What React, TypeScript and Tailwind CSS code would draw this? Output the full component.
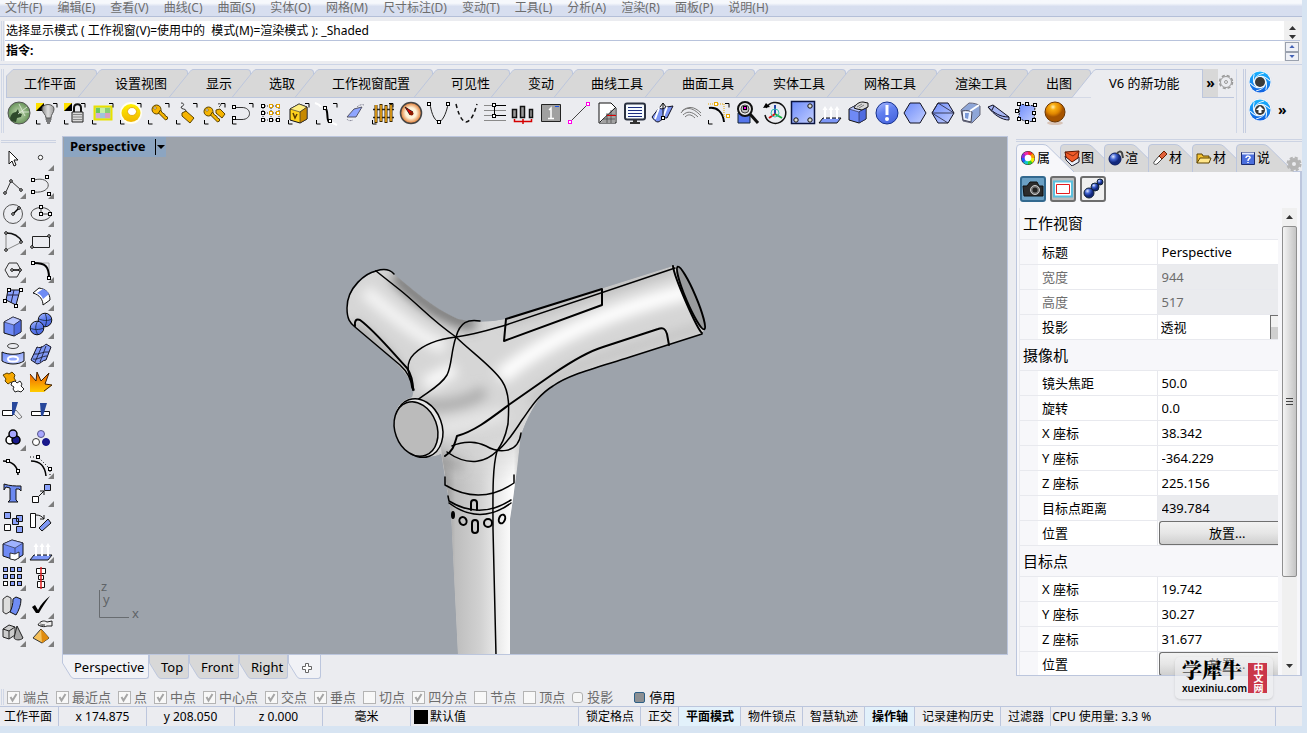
import { useState } from 'react'
import type { ReactNode } from 'react'
import clsx from 'clsx'

type Tool = { label: string; art: ReactNode; more?: boolean }

const menus = [
  '文件(F)', '编辑(E)', '查看(V)', '曲线(C)', '曲面(S)', '实体(O)', '网格(M)', '尺寸标注(D)',
  '变动(T)', '工具(L)', '分析(A)', '渲染(R)', '面板(P)', '说明(H)',
]

const toolbarTabs = [
  { name: '工作平面', width: 'w-[91px]' },
  { name: '设置视图', width: 'w-[91px]' },
  { name: '显示', width: 'w-[63px]' },
  { name: '选取', width: 'w-[63px]' },
  { name: '工作视窗配置', width: 'w-[119px]' },
  { name: '可见性', width: 'w-[77px]' },
  { name: '变动', width: 'w-[63px]' },
  { name: '曲线工具', width: 'w-[91px]' },
  { name: '曲面工具', width: 'w-[91px]' },
  { name: '实体工具', width: 'w-[91px]' },
  { name: '网格工具', width: 'w-[91px]' },
  { name: '渲染工具', width: 'w-[91px]' },
  { name: '出图', width: 'w-[63px]' },
  { name: 'V6 的新功能', width: 'w-[111px]' },
]

/* ---------- drawing helpers ---------- */

function Sq({ x, y, c = '#000', f = '#fff' }: { x: number; y: number; c?: string; f?: string }) {
  return <rect x={x - 1.5} y={y - 1.5} width="3" height="3" fill={f} stroke={c} strokeWidth="1" />
}

function Dot({ x, y }: { x: number; y: number }) {
  return <circle cx={x} cy={y} r="1.3" fill="#fff" stroke="#000" />
}

function Marks() {
  return <path d="M3.500 21v4h4M20 4.500h4v4" fill="none" stroke="#000" />
}

function Key() {
  return (
    <>
      <circle cx="11.500" cy="10.500" r="4.500" fill="#f6b400" stroke="#5a4300" />
      <circle cx="10" cy="9" r="1.200" fill="#fff" stroke="#5a4300" strokeWidth=".6" />
      <path d="M13.500 14l7 7 2-1v-2l-2-1-1-2-2-1-2-3z" fill="#f6b400" stroke="#5a4300" />
    </>
  )
}

function Arrows() {
  return (
    <>
      <path d="M2 24l4-5h18l-4 5z" fill="#7d97f7" stroke="#111" />
      <path d="M8 20V9M14 20V9M20 20V9" stroke="#fff" strokeWidth="2" />
      <path d="M5.500 11L8 7l2.500 4zM11.500 11L14 7l2.500 4zM17.500 11L20 7l2.500 4z" fill="#fff" />
    </>
  )
}

function Cube({ fill = '#6f8af5', top = '#b9c6ff', side = '#4f6be0' }) {
  return (
    <>
      <path d="M4 10l9-5 8 3v12l-7 4-10-3z" fill={fill} stroke="#111" />
      <path d="M4 10l9-5 8 3-7 5z" fill={top} stroke="#223" strokeWidth=".6" />
      <path d="M14 13l7-5v12l-7 4z" fill={side} stroke="#223" strokeWidth=".6" />
    </>
  )
}

const tools: Tool[] = [
  {
    label: 'Rhino',
    art: (
      <>
        <circle cx="14" cy="14" r="11" fill="url(#green)" stroke="#555" />
        <path d="M5 19c1-4 3-6 6-6l2-3 1 4 3 1-1 3-4 1-1 4-5-1z" fill="#2f4a2c" />
        <path d="M14 5l6 12M22 8l-9 7M17 13h7" stroke="#e5eede" strokeWidth=".8" />
      </>
    ),
  },
  {
    label: '隐藏',
    art: (
      <>
        <path d="M3 4h8v8H3z" fill="#ffe100" /><path d="M11 4v8H3z" fill="#000" />
        <path d="M9 10c0-6 12-6 12 0 0 4-3 5-3 9h-5c0-4-4-5-4-9z" fill="url(#steel)" stroke="#555" />
        <path d="M12.500 20h6M13 22h5M14 24h3" stroke="#555" strokeWidth="1.500" /><Marks />
      </>
    ),
  },
  {
    label: '锁定',
    art: (
      <>
        <path d="M3 4h8v8H3z" fill="#ffe100" /><path d="M11 4v8H3z" fill="#000" />
        <path d="M13 13V9c0-5 7-5 7 0v4" fill="none" stroke="#111" strokeWidth="2" />
        <path d="M11 13h11v10H11z" fill="#d9d9d9" stroke="#222" /><path d="M12 15.500h9M12 18h9M12 20.500h9" stroke="#888" /><Marks />
      </>
    ),
  },
  {
    label: '色阶',
    art: (
      <>
        <path d="M5.500 7.500h17v13h-17z" fill="#b7dba8" stroke="#e9e100" strokeWidth="2" />
        <path d="M7 9h4v5H7z" fill="#68c864" /><path d="M11 9h5v5h-5z" fill="#c8f0a5" /><path d="M16 9h5v5h-5z" fill="#88cf72" />
        <path d="M7 14h4v5H7z" fill="#d5a8d8" /><path d="M11 14h5v5h-5z" fill="#9fc3dc" /><path d="M16 14h5v5h-5z" fill="#d9a0bd" /><Marks />
      </>
    ),
  },
  {
    label: '环',
    art: (
      <>
        <circle cx="14" cy="14" r="11" fill="#fffef0" />
        <ellipse cx="14" cy="14" rx="9.500" ry="9" fill="url(#gold)" />
        <ellipse cx="15" cy="12.500" rx="4.500" ry="4" fill="#fff" stroke="#e0a000" strokeWidth=".8" /><Marks />
      </>
    ),
  },
  { label: '钥匙', art: <><Key /><Marks /></> },
  {
    label: '标签',
    art: (
      <>
        <path d="M8 4c4 0 3 3 0 4 0 3 5 1 5 4" fill="none" stroke="#333" />
        <path d="M9 14l4-2 8 7-4 5-8-7z" fill="#f6b400" stroke="#5a4300" /><Marks />
      </>
    ),
  },
  {
    label: '标签与钥匙',
    art: (
      <>
        <g transform="translate(-4 2)"><Key /></g>
        <path d="M17 5c3-1 4 1 1 3" fill="none" stroke="#333" />
        <path d="M15 11l4-1 5 5-3 4-6-5z" fill="#f6b400" stroke="#5a4300" /><Marks />
      </>
    ),
  },
  {
    label: '圆弧',
    art: (
      <>
        <path d="M7 8.500h6c10 0 10 12 0 12H7" fill="none" stroke="#333" />
        <Sq x={5} y={8} /><Sq x={5} y={19} /><Marks />
      </>
    ),
  },
  {
    label: '控制点',
    art: (
      <>
        <path d="M6 7h16M6 14h16M6 21h16M6 7v14M14 7v14M22 7v14" stroke="#333" strokeDasharray="1 1" />
        <Sq x={6} y={7} /><Sq x={14} y={7} c="#e0a000" /><Sq x={21} y={7} c="#e0a000" />
        <Sq x={6} y={14} /><Sq x={14} y={14} c="#e0a000" /><Sq x={21} y={14} c="#e0a000" />
        <Sq x={6} y={21} /><Sq x={14} y={21} /><Sq x={21} y={21} />
      </>
    ),
  },
  {
    label: '方块',
    art: (
      <>
        <g transform="translate(1)"><Cube fill="#ffd21c" top="#ffef80" side="#c78900" /></g>
        <path d="M8 14l2 5 2-4" fill="none" stroke="#5a3c00" strokeWidth="1.500" /><Marks />
      </>
    ),
  },
  {
    label: '曲线混接',
    art: (
      <>
        <path d="M2 4c3 1 5 2 6 4M17 23c3 1 5 2 7 3" fill="none" stroke="#fff" strokeWidth="2" />
        <path d="M12 9c4 2 1 12 4 14" fill="none" stroke="#000" strokeWidth="2" />
        <Sq x={12} y={9} /><Sq x={17} y={22} /><Marks />
      </>
    ),
  },
  {
    label: '平面',
    art: (
      <>
        <path d="M6 18l7-8 8-2-6 10z" fill="#8fa6ff" stroke="#556" />
        <path d="M6 20c1 2 4 2 6 1M16 8c2-2 5-3 7-2" fill="none" stroke="#889" strokeDasharray="2 1" />
      </>
    ),
  },
  {
    label: '围栏',
    art: (
      <>
        <path d="M4 10.500h21M4 18.500h21" stroke="#222" strokeWidth="1.500" />
        <path d="M7 6v18M12 5v18M17 6v18M22 5v18" stroke="#3a2600" strokeWidth="3" />
        <path d="M7 6v17M12 6v16M17 7v16M22 6v16" stroke="#ffb31c" strokeWidth="1.500" /><Marks />
      </>
    ),
  },
  {
    label: '仪表',
    art: (
      <>
        <circle cx="14" cy="14" r="10.500" fill="url(#dial)" stroke="#444" strokeWidth="1.500" />
        <path d="M8 8l8 5-3 3z" fill="#e00000" stroke="#111" strokeWidth=".8" /><circle cx="14.500" cy="14.500" r="2" fill="#8c1c00" />
      </>
    ),
  },
  {
    label: '抛物线',
    art: (
      <>
        <path d="M5 5c1 6 3 16 9 18 5-2 8-12 9-18" fill="none" stroke="#222" />
        <Sq x={4} y={5} /><Sq x={23} y={5} /><Sq x={14} y={23} />
      </>
    ),
  },
  { label: '虚线', art: <path d="M3 5c2 8 5 17 10 18 6-1 9-11 11-18" fill="none" stroke="#111" strokeWidth="1.500" strokeDasharray="4 3" /> },
  {
    label: '对齐线',
    art: (
      <>
        <path d="M3 6.500h22M3 11.500h22M3 16.500h22M3 21.500h22" stroke="#8a8a8a" />
        <path d="M13.500 6.500v10M13 6.500h12M13 16.500h12" fill="none" stroke="#000" /><Sq x={13} y={6} /><Sq x={13} y={17} />
      </>
    ),
  },
  {
    label: '分布',
    art: (
      <>
        <path d="M3.500 10.500h4v8h-4zM11.500 7.500h4v11h-4zM20.500 10.500h3v8h-3z" fill="#9b9b9b" stroke="#111" strokeWidth="1.500" />
        <path d="M5.500 20v2.500h17V20M14 20v5" fill="none" stroke="#d40000" strokeWidth="1.500" />
      </>
    ),
  },
  {
    label: '图框',
    art: (
      <>
        <path d="M4.500 5.500h19v17h-19z" fill="#a0a0a0" stroke="#222" />
        <path d="M18 7.500h4" stroke="#1c53e5" /><path d="M12 11l2-2v10m-3 .5h6" fill="none" stroke="#fff" strokeWidth="1.500" />
      </>
    ),
  },
  {
    label: '直线',
    art: <><path d="M5 23L23 5" stroke="#444" /><Sq x={5} y={23} c="#ff00e6" /><Sq x={23} y={5} c="#ff00e6" /></>,
  },
  {
    label: '剖面线',
    art: (
      <>
        <path d="M6 4h12l5 5v15H6z" fill="#fff" stroke="#111" /><path d="M22 9v15H7z" fill="#a2a2a2" />
        <path d="M13 16h9M10 20h12M14 14v10M18 11v13" stroke="#444" strokeWidth=".7" /><path d="M7 23L22 9" stroke="#111" /><path d="M14 16.500h9" stroke="#d80000" />
      </>
    ),
  },
  {
    label: '显示器',
    art: (
      <>
        <rect x="4" y="4.500" width="20" height="16" rx="2" fill="#f6fbff" stroke="#2a3140" strokeWidth="2" />
        <path d="M7 8.500h14M7 11.500h14M7 14.500h14M7 17.500h14" stroke="#1b2e80" /><path d="M9 24h10" stroke="#333" strokeWidth="2" /><path d="M14 21v3" stroke="#333" strokeWidth="4" />
      </>
    ),
  },
  {
    label: '流动',
    art: (
      <>
        <path d="M3 18l7-9c3 2 5 0 8-1l6-1-6 12c-3-1-6 3-9 4-2 0-4-2-6-5z" fill="#7b94f5" stroke="#112" />
        <path d="M10 9l-4 11M18 8l-5 13" stroke="#fff" strokeWidth="2" /><path d="M14 18V4l-3 4m3-4l3 4" fill="none" stroke="#111" /><Sq x={14} y={19} />
      </>
    ),
  },
  {
    label: '等距',
    art: <path d="M4 14c4-6 11-7 20 3M6 16c4-4 9-4 15 2M8 18c3-3 6-3 10 1M5 12c6-5 12-5 19 2" fill="none" stroke="#777" />,
  },
  {
    label: '圆角',
    art: (
      <>
        <path d="M4 9c8-1 14 4 15 14" fill="none" stroke="#000" strokeWidth="2" /><path d="M3 5h16v14" fill="none" stroke="#e9a800" strokeDasharray="1 1" />
        <Sq x={11} y={5} c="#e9a800" /><Sq x={23} y={17} c="#e9a800" /><Marks />
      </>
    ),
  },
  {
    label: '查找',
    art: (
      <>
        <path d="M5 14h12v10H5z" fill="#5676ec" stroke="#123" /><circle cx="12" cy="10" r="7" fill="#e8e8e8" stroke="#111" strokeWidth="2" />
        <circle cx="12" cy="10" r="4" fill="#bbb" stroke="#444" /><path d="M17 15l8 9" stroke="#111" strokeWidth="3" /><Sq x={12} y={9} f="#f0e" />
      </>
    ),
  },
  {
    label: '重设轴',
    art: (
      <>
        <path d="M5 9A10.500 10.500 0 1 1 4 16" fill="none" stroke="#111" strokeWidth="1.500" /><path d="M2 9l7-1-4-4z" />
        <path d="M14 15V6" stroke="#2444a8" strokeWidth="2" /><path d="M14 15l-6 4" stroke="#e01010" strokeWidth="2" /><path d="M14 15l7 4" stroke="#18b040" strokeWidth="2" />
        <circle cx="14" cy="14" r="4" fill="none" stroke="#3bc0b0" />
      </>
    ),
  },
  {
    label: '面孔',
    art: (
      <>
        <path d="M2.500 2.500h23v22h-23z" fill="url(#blue)" stroke="#0b1440" strokeWidth="1.500" />
        {[[21, 7], [7, 21], [21, 21]].map(([x, y]) => <circle key={`${x}-${y}`} cx={x} cy={y} r="2.200" fill="#dcdcd0" stroke="#111" />)}
      </>
    ),
  },
  { label: '方向', art: <Arrows /> },
  {
    label: '推拉',
    art: <><Cube /><path d="M9 9c2-4 5-6 9-6l5 1v4l-6 3-5-1z" fill="#d8d8d8" stroke="#111" /><path d="M12 8l5-3M14 9l5-3" stroke="#555" strokeWidth=".7" /></>,
  },
  {
    label: '提醒',
    art: <><circle cx="14" cy="14" r="11" fill="url(#alert)" stroke="#15308c" /><path d="M14 6v10" stroke="#fff" strokeWidth="3" /><circle cx="14" cy="20" r="2" fill="#fff" /></>,
  },
  { label: '网格面', art: <path d="M3 14l6-10h10l6 10-6 10H9z" fill="url(#blue)" stroke="#112" /> },
  {
    label: '三角网格',
    art: <><path d="M3 14l6-10h10l6 10-6 10H9z" fill="url(#blue)" stroke="#112" /><path d="M9 4l16 10H3l16 10M3 14L9 4" fill="none" stroke="#223" strokeWidth=".8" /></>,
  },
  {
    label: '管',
    art: (
      <>
        <path d="M4 11l8-7c5 0 9 1 11 3v9l-8 8-9-2z" fill="#8ea6d8" stroke="#667" /><path d="M5 12c5-1 8 0 10 1l-1 10-8-2z" fill="#eef3ff" stroke="#445" /><path d="M8 14h4l-1 6-3-1z" fill="#7c9ad6" /><path d="M13 12l9-6" stroke="#fff" strokeWidth="2" />
      </>
    ),
  },
  {
    label: '拔模',
    art: <><path d="M3 8l5-2 16 12v3c-7 0-15-5-21-13z" fill="#a8b7f5" stroke="#112" /><path d="M3 8c6 6 12 10 21 10M9 7l-2 4" fill="none" stroke="#112" /></>,
  },
  {
    label: '曲面编辑',
    art: (
      <>
        <path d="M6 5l16 2-1 15-7 1-9-4c2-5 2-9 1-14z" fill="url(#blue)" stroke="#111" strokeDasharray="2 1" />
        <Sq x={6} y={5} /><Sq x={14} y={5} /><Sq x={22} y={6} /><Sq x={4} y={12} /><Sq x={21} y={14} /><Sq x={6} y={20} /><Sq x={14} y={23} /><Sq x={21} y={21} />
      </>
    ),
  },
  { label: '材质球', art: <><ellipse cx="14" cy="24" rx="8" ry="2" fill="#d8c4b8" /><circle cx="14" cy="13" r="10" fill="url(#orange)" stroke="#6b3500" /></> },
]

const sideTools: Tool[] = [
  { label: '选取', art: <path d="M9 7v13l3-3 2 5 2-1-2-5h4z" fill="#fff" stroke="#111" /> },
  { label: '点', more: true, art: <circle cx="12.500" cy="13.500" r="2.200" fill="#fff" stroke="#333" /> },
  { label: '多重直线', more: true, art: <><path d="M5 22l6-13 10 9" fill="none" stroke="#333" /><Dot x={5} y={21} /><Dot x={11} y={9} /><Dot x={21} y={18} /></> },
  { label: '曲线', more: true, art: <><path d="M6 8c18-5 20 14 0 12" fill="none" stroke="#555" /><Sq x={5} y={8} /><Sq x={19} y={5} /><Sq x={5} y={20} /><Sq x={21} y={22} /></> },
  { label: '圆', more: true, art: <><circle cx="13" cy="14" r="9.500" fill="none" stroke="#555" /><path d="M13 14l6-6" stroke="#000" strokeWidth="1.500" /><Dot x={13} y={14} /><Dot x={19} y={8} /></> },
  { label: '椭圆', more: true, art: <><ellipse cx="13" cy="14" rx="10" ry="6.500" fill="none" stroke="#444" /><path d="M13 7v7h9" fill="none" stroke="#444" /><Sq x={13} y={7} /><Sq x={13} y={14} /><Sq x={22} y={14} /></> },
  { label: '圆弧', more: true, art: <><path d="M6 22V5M6 22l16-8" fill="none" stroke="#888" /><path d="M6 5c7 0 13 3 16 9" fill="none" stroke="#111" strokeWidth="1.500" /><Dot x={6} y={5} /><Dot x={21} y={14} /><Dot x={6} y={22} /></> },
  { label: '矩形', more: true, art: <><path d="M4.500 8.500h17v11h-17z" fill="none" stroke="#222" /><Dot x={21} y={8} /><Dot x={4} y={19} /></> },
  { label: '多边形', more: true, art: <><path d="M5 14l4-7h8l4 7-4 7H9z" fill="none" stroke="#333" /><path d="M13 14h8" stroke="#000" strokeWidth="1.500" /><Dot x={12} y={14} /><Dot x={20} y={14} /></> },
  { label: '圆角', more: true, art: <><path d="M9 7h12v14" fill="none" stroke="#aaa" /><path d="M6 7c11 0 15 3 15 15" fill="none" stroke="#000" strokeWidth="2" /><Sq x={5} y={7} /><Sq x={21} y={22} /></> },
  { label: '曲面', more: true, art: <><path d="M8 6h12l-4 15-10-5z" fill="#8aa1fa" stroke="#111" /><path d="M14 6l-3 13M7 11h11" stroke="#224" /><Sq x={9} y={6} /><Sq x={21} y={6} /><Sq x={5} y={17} /><Sq x={16} y={22} /></> },
  { label: '放样', more: true, art: <><path d="M5 9l6-5c7 1 11 5 11 12l-7 5c0-5-3-10-10-12z" fill="#fff" stroke="#111" /><path d="M9 9l6-4c3 1 5 3 6 5l-6 5c-1-3-3-5-6-6z" fill="#6f8cf4" /></> },
  { label: '立方体', more: true, art: <Cube /> },
  { label: '布尔', more: true, art: <><circle cx="17" cy="8" r="6.800" fill="url(#alert)" stroke="#111" /><circle cx="9" cy="16" r="6.800" fill="url(#alert)" stroke="#111" /><path d="M2 16c4 2 9 2 14 0M10 9c-3 4-3 9 0 14M17 1c2 5 2 9 0 14M11 7c5 2 9 2 13 0" fill="none" stroke="#123" strokeWidth=".8" /></> },
  { label: '投影', more: true, art: <><ellipse cx="13" cy="6" rx="5.500" ry="2.500" fill="none" stroke="#444" /><path d="M2 12c6 3 16 3 22 0v9c-6 4-16 4-22 0z" fill="url(#blue)" stroke="#111" /><ellipse cx="13" cy="19" rx="5" ry="2.500" fill="#8fa6ff" stroke="#fff" strokeWidth="2" /></> },
  { label: '网格', more: true, art: <><path d="M9 7c4 2 8-2 9-3l5 3-5 13c-4 0-5 4-9 4l-6-4z" fill="#7f98f5" stroke="#112" /><path d="M6 14c5 1 9-3 15-2M5 19c5 1 9-3 14-3M7 22l7-16M12 22l6-16" fill="none" stroke="#112" strokeWidth=".8" /></> },
  { label: '炸开', art: <><path d="M3 7l4-2 2 1 3-2 3 3-1 3 2 3-3 2-2-1-3 2-3-3 1-2z" fill="#f6a800" stroke="#5a4000" /><path d="M12 14l3-1 2 2 3-2 2 3-1 2 3 3-3 3-3-1-3 1-2-3 1-2-3-2z" fill="#fff" stroke="#222" /></> },
  { label: '爆炸', art: <><path d="M2 6l6 7 1-9 4 9 8-8-4 11 7 1-8 7H2z" fill="url(#fire)" /><path d="M2 6l6 7 1-9 4 9 8-8-4 11 7 1-8 6" fill="none" stroke="#402000" /></> },
  { label: '修剪', art: <><path d="M2.500 14.500h10v5h-10z" fill="#fff" stroke="#111" /><path d="M13 17l3-3 6 7-3 2z" fill="none" stroke="#777" /><path d="M12 6h6l-4 13h-2z" fill="#27479b" /></> },
  { label: '分割', art: <><path d="M3.500 15.500h18v4h-18z" fill="#fff" stroke="#111" /><path d="M12 7h7l-4 13h-2z" fill="#27479b" /></> },
  { label: '群组', more: true, art: <g stroke="#000" strokeWidth="1.500"><circle cx="10" cy="16" r="4" fill="#fff" /><circle cx="16" cy="16" r="4" fill="#1a1a8c" /><circle cx="13" cy="10" r="4" fill="#a7a6ff" /></g> },
  { label: '解散群组', art: <><circle cx="13" cy="10" r="3.500" fill="#a7a6ff" stroke="#558" /><circle cx="8" cy="18" r="3.500" fill="#fff" stroke="#333" /><circle cx="18" cy="18" r="3.500" fill="#1a1a8c" stroke="#118" /></> },
  { label: '编辑点', art: <><path d="M3 9c9 0 15 5 15 14" fill="none" stroke="#000" strokeWidth="1.500" /><Sq x={8} y={9} /><Sq x={18} y={19} /></> },
  { label: '控制点', more: true, art: <><path d="M3 9c9 0 14 5 15 15" fill="none" stroke="#000" strokeWidth="1.500" /><path d="M2 5h8l12 12v8" fill="none" stroke="#000" strokeDasharray="1 2" /><Sq x={10} y={5} /><Sq x={22} y={17} /></> },
  { label: '文字', art: <path d="M4 4c6 2 11 2 17 2v5l-2-2h-3v11l2 2H8l2-2V8l-4-1-2 3z" fill="#6d8af0" stroke="#111" /> },
  { label: '移动', more: true, art: <><path d="M4.500 16.500h6v6h-6z" fill="#fff" stroke="#111" /><path d="M16.500 4.500h6v6h-6z" fill="#8aa1fa" stroke="#111" /><path d="M11 16l5-5m-4 0h4v4" fill="none" stroke="#111" /></> },
  { label: '复制', art: <g stroke="#111" fill="#8aa1fa"><path d="M4.500 4.500h6v6h-6zM16.500 7.500h6v6h-6zM12.500 10.500h6v6h-6zM16.500 18.500h6v6h-6z" /><path d="M4.500 16.500h6v6h-6z" fill="#fff" /></g> },
  { label: '旋转', art: <><path d="M2.500 5.500h5v14h-5z" fill="#fff" stroke="#111" /><path d="M8 7c3 0 6 1 8 4m0-4v4h-4" fill="none" stroke="#111" /><path d="M11 20l9-9 3 4-9 8z" fill="#7f98f5" stroke="#111" /></> },
  { label: '实体', more: true, art: <><path d="M3 8l9-4 11 3v12l-8 5-12-4z" fill="#6f8af5" stroke="#111" /><path d="M3 8l9-4 11 3-8 5z" fill="#9fb2ff" stroke="#223" strokeWidth=".6" /><path d="M15 12v12" stroke="#223" strokeWidth=".6" /><path d="M10 17l5 1 4-2v6l-4 2-5-1z" fill="#fff" stroke="#111" strokeWidth=".8" /></> },
  { label: '法线', more: true, art: <Arrows /> },
  {
    label: '阵列', more: true,
    art: (
      <g stroke="#111">
        {[5, 12, 19].map((y) => [5, 12, 19].map((x) => <rect key={`${x}-${y}`} x={x - 1.5} y={y - 1.5} width="4" height="4" fill={x === 5 && y === 19 ? '#fff' : '#8aa1fa'} />))}
      </g>
    ),
  },
  { label: '对齐', more: true, art: <><path d="M8.500 4.500h9v5h-9zM10.500 11.500h5v4h-5zM9.500 17.500h7v6h-7z" fill="#fff" stroke="#111" /><path d="M13 3v22" stroke="#e02020" strokeWidth="1.500" /></> },
  { label: '弯曲', more: true, art: <><path d="M3 7l4-3 4 2v13l-5 3-3-2z" fill="#ddd" stroke="#333" /><path d="M13 7l3-2 5 2c0 6-2 11-5 16l-6-3c2-4 3-8 3-13z" fill="#6f8cf4" stroke="#111" /></> },
  { label: '检查', more: true, art: <path d="M4 15l3-2 3 5C13 12 17 8 22 4c-4 6-8 11-11 17H8z" fill="#000" /> },
  { label: '原始物件', more: true, art: <><path d="M3 9l6-4 6 2v8l-6 4-6-2z" fill="#ccc" stroke="#222" /><path d="M3 9l6 2 6-4M9 11v8" fill="none" stroke="#222" /><path d="M17 6l6 12c-3 3-8 2-9 0z" fill="#a9a9a9" stroke="#222" /></> },
  { label: '渲染', more: true, art: <><path d="M10 5c2-4 6-5 9-3l5-1v5h-5c-2 1-5 1-9-1z" fill="#eee" stroke="#222" /><path d="M12 4l5 1M12 6l5-1" stroke="#444" strokeWidth=".7" /><path d="M13 9L5 18l9 5 7-5z" fill="#f5c05a" stroke="#333" /><path d="M13 9l1 14 7-5z" fill="#e08c10" /></> },
]

const snaps = [
  ['端点', true], ['最近点', true], ['点', true], ['中点', true], ['中心点', true], ['交点', true],
  ['垂点', true], ['切点', false], ['四分点', true], ['节点', false], ['顶点', false],
] as const

const statusToggles = ['锁定格点', '正交', '平面模式', '物件锁点', '智慧轨迹', '操作轴', '记录建构历史']

type Row = { label: string; value: string; kind?: 'disabled' | 'readonly' | 'select' | 'button' }

const groups: { title: string; rows: Row[] }[] = [
  {
    title: '工作视窗',
    rows: [
      { label: '标题', value: 'Perspective' },
      { label: '宽度', value: '944', kind: 'disabled' },
      { label: '高度', value: '517', kind: 'disabled' },
      { label: '投影', value: '透视', kind: 'select' },
    ],
  },
  {
    title: '摄像机',
    rows: [
      { label: '镜头焦距', value: '50.0' },
      { label: '旋转', value: '0.0' },
      { label: 'X 座标', value: '38.342' },
      { label: 'Y 座标', value: '-364.229' },
      { label: 'Z 座标', value: '225.156' },
      { label: '目标点距离', value: '439.784', kind: 'readonly' },
      { label: '位置', value: '放置...', kind: 'button' },
    ],
  },
  {
    title: '目标点',
    rows: [
      { label: 'X 座标', value: '19.742' },
      { label: 'Y 座标', value: '30.27' },
      { label: 'Z 座标', value: '31.677' },
      { label: '位置', value: '放置...', kind: 'button' },
    ],
  },
]

const hues = ['#ff2a2a', '#ff9d00', '#f4f000', '#35d02c', '#12c8c8', '#2458ff', '#8a2be2', '#f02aa8']

const panelTabs: { name: string; art: ReactNode }[] = [
  {
    name: '属',
    art: (
      <>
        <circle cx="8" cy="8" r="7" fill="#222" />
        <g fill="none" strokeWidth="3.500">
          {hues.map((c, i) => <path key={c} d="M8 3.200A4.800 4.800 0 0 1 11.600 4.800" stroke={c} transform={`rotate(${i * 45} 8 8)`} />)}
        </g>
        <circle cx="8" cy="8" r="3.300" fill="#fff" />
      </>
    ),
  },
  { name: '图', art: <><path d="M1 6l7 5 7-4v5l-7 4-6-6z" fill="#e8eef8" stroke="#223" /><path d="M1 2l14-1-1 7-6 4-6-5z" fill="#f05a28" stroke="#5c1600" /><path d="M1 2l8 4 6-5" fill="none" stroke="#5c1600" strokeWidth=".7" /></> },
  { name: '渲', art: <><circle cx="7" cy="9" r="6" fill="url(#ball)" stroke="#0b1c60" /><path d="M9 4c1-3 4-3 5-1l1 5" fill="none" stroke="#444" strokeWidth="2" /></> },
  { name: '材', art: <><path d="M2 12l5-6 3 3-5 5c-2 1-4 0-3-2z" fill="#fff" stroke="#444" /><path d="M7 6l5-5 3 3-5 5z" fill="#e0603a" stroke="#6a2000" /></> },
  { name: '材', art: <><path d="M1 13V4h5l1 2h6v2" fill="#f5c330" stroke="#5c4300" /><path d="M1 13l3-5h11l-2 5z" fill="#ffe68a" stroke="#5c4300" /></> },
  { name: '说', art: <><path d="M1.500 2.500h13v12h-13z" fill="#4b6edc" stroke="#1c2c70" /><path d="M2 3.500h12" stroke="#dfe6ff" strokeWidth="2" /><path d="M6 8c0-3 5-2 4 0-1 1-2 1-2 3M8 12v1" fill="none" stroke="#fff" strokeWidth="1.500" /></> },
]

function Gradients() {
  return (
    <svg className="absolute size-0" aria-hidden="true">
      <defs>
        <radialGradient id="green"><stop offset="0" stopColor="#c4dcb4" /><stop offset="1" stopColor="#68935a" /></radialGradient>
        <linearGradient id="steel"><stop offset="0" stopColor="#858585" /><stop offset=".5" stopColor="#ddd" /><stop offset="1" stopColor="#999" /></linearGradient>
        <linearGradient id="gold" x2="0" y2="1"><stop offset="0" stopColor="#fff200" /><stop offset="1" stopColor="#f0b400" /></linearGradient>
        <radialGradient id="dial"><stop offset=".5" stopColor="#fff3da" /><stop offset="1" stopColor="#e0762a" /></radialGradient>
        <linearGradient id="blue" x2="1" y2="1"><stop offset="0" stopColor="#6d8bfa" /><stop offset="1" stopColor="#c3cfff" /></linearGradient>
        <radialGradient id="ball" cx=".35" cy=".3"><stop offset="0" stopColor="#dfe8ff" /><stop offset=".5" stopColor="#4264d2" /><stop offset="1" stopColor="#12287c" /></radialGradient>
        <linearGradient id="alert" x2=".5" y2="1"><stop offset="0" stopColor="#b0c0ff" /><stop offset=".5" stopColor="#6280f0" /><stop offset="1" stopColor="#4a68e0" /></linearGradient>
        <radialGradient id="orange" cx=".4" cy=".25"><stop offset="0" stopColor="#fff0b0" /><stop offset=".3" stopColor="#f8ac10" /><stop offset=".7" stopColor="#e08600" /><stop offset="1" stopColor="#a65400" /></radialGradient>
        <linearGradient id="fire" x2="0" y2="1"><stop offset="0" stopColor="#ee5a00" /><stop offset="1" stopColor="#ffcc00" /></linearGradient>
        <linearGradient id="iris" x2="0" y2="1"><stop offset="0" stopColor="#19b4ff" /><stop offset="1" stopColor="#0f5fe0" /></linearGradient>
      </defs>
    </svg>
  )
}

function ToolButton({ tool }: { tool: Tool }) {
  return (
    <button type="button" aria-label={tool.label} className="size-7 shrink-0">
      <svg viewBox="0 0 28 28" className="size-7">
        {tool.art}
        {tool.more && <path d="M26 21v6h-6z" fill="#7d7d7d" />}
      </svg>
    </button>
  )
}

function Iris({ inner }: { inner: ReactNode }) {
  return (
    <svg viewBox="0 0 24 24" className="size-6">
      <circle cx="12" cy="12" r="11.500" fill="#fff" stroke="#d5dbe6" strokeWidth=".5" />
      <circle cx="12" cy="12" r="10.500" fill="url(#iris)" />
      {[0, 60, 120, 180, 240, 300].map((a) => (
        <path key={a} d="M6.500 11C7 7 10 4.500 16 3" fill="none" stroke="#e8f7ff" strokeWidth="1" transform={`rotate(${a} 12 12)`} />
      ))}
      <circle cx="12" cy="12" r="6" fill="#fff" />
      {inner}
    </svg>
  )
}

function CommandArea() {
  return (
    <section className="flex border-b border-[#ccd4e6] pt-1 pb-[3px]">
      <div className="mr-px ml-px w-[3px] border-x border-[#d0d7e6]" />
      <div className="min-w-0 flex-1 bg-white">
        <p className="h-5 border-b border-[#b8c3dc] px-px leading-5 whitespace-pre">
          {'选择显示模式 ( 工作视窗(V)=使用中的  模式(M)=渲染模式 ): _Shaded'}
        </p>
        <div className="flex h-5 items-center px-px">
          <label htmlFor="command" className="font-bold">指令:</label>
          <input id="command" className="min-w-0 flex-1 px-1 outline-none" />
        </div>
      </div>
      <div className="w-4 bg-[#f0f0f0]">
        <div className="flex h-5 flex-col items-center justify-between border-b border-[#b8c3dc] pt-[5px] pb-px">
          <svg viewBox="0 0 7 4" className="h-1 w-[7px]"><path d="M0 4l3.500-4L7 4z" fill="#333" /></svg>
          <svg viewBox="0 0 7 4" className="h-1 w-[7px]"><path d="M0 0h7L3.500 4z" fill="#333" /></svg>
        </div>
        <div className="flex h-5 flex-col px-px pt-px">
          <button type="button" aria-label="上一个" className="flex flex-1 items-center justify-center border border-[#9aa1ae] bg-[#eef0f6]">
            <svg viewBox="0 0 7 4" className="h-[3px] w-[6px]"><path d="M0 4l3.500-4L7 4z" fill="#4361b5" /></svg>
          </button>
          <button type="button" aria-label="下一个" className="flex flex-1 items-center justify-center border border-[#9aa1ae] bg-[#eef0f6]">
            <svg viewBox="0 0 7 4" className="h-[3px] w-[6px]"><path d="M0 0h7L3.500 4z" fill="#4361b5" /></svg>
          </button>
        </div>
      </div>
      <div className="w-0.5" />
    </section>
  )
}

function ToolTabs() {
  const [active, setActive] = useState(13)
  return (
    <div className="flex h-[29px] pl-0.5">
      {toolbarTabs.map((tab, i) => {
        const on = i === active
        return (
          <button key={tab.name} type="button" onClick={() => setActive(i)} className={clsx('relative h-[29px] shrink-0 pl-[18px] text-left text-[13px]', tab.width)}>
            <svg viewBox="0 0 24 29" className={clsx('absolute top-0 h-[29px] w-6', i === 0 ? 'left-0' : '-left-[19px]')}>
              <path
                d={i === 0 ? 'M.5 29V7L7 .5h17V28.500H.5' : 'M0 28.500L21 2.500Q22.500 .5 24 .5V28.500z'}
                fill={on ? '#ebecf0' : '#d8d8d8'}
              />
              <path d={i === 0 ? 'M.5 29V7L7 .5h17' : 'M0 28.500L21 2.500Q22.500 .5 24 .5'} fill="none" stroke="#bcc6dd" />
              {!on && <path d="M0 28.500h24" stroke="#bcc6dd" />}
            </svg>
            <span className={clsx('absolute inset-y-0 right-0 border-t border-[#bcc6dd]', i === 0 ? 'left-6' : 'left-[5px]', on ? 'bg-[#ebecf0]' : 'rounded-tr-[4px] border-r border-b bg-[#d8d8d8]')} />
            <span className="relative whitespace-nowrap">{tab.name}</span>
          </button>
        )
      })}
      <button type="button" aria-label="更多" className="w-4 border-b border-l border-[#bcc6dd] bg-[#d8d8d8] text-center text-sm leading-6 font-bold">»</button>
      <div className="flex w-4 justify-center border-b border-[#bcc6dd] pt-[5px]">
        <svg viewBox="0 0 16 16" className="size-4"><circle cx="8" cy="8" r="6.500" fill="none" stroke="#999" strokeWidth="1.500" strokeDasharray="3.100 2" /><circle cx="8" cy="8" r="5.500" fill="#ebecf0" stroke="#999" /><circle cx="8" cy="8" r="1.500" fill="none" stroke="#999" /></svg>
      </div>
    </div>
  )
}

function Toolbars() {
  return (
    <section className="flex h-[71px] shrink-0 pt-1">
      <div className="ml-px h-16 w-[3px] border-x border-[#d0d7e6]" />
      <div className="min-w-0 flex-1 overflow-hidden">
        <ToolTabs />
        <div className="flex pt-px pl-px">
          {tools.map((t) => <ToolButton key={t.label} tool={t} />)}
        </div>
      </div>
      <div className="flex h-16 w-[66px] shrink-0">
        <div className="mr-[6px] border-l border-[#d0d7e6]" />
        <div className="w-[3px] border-x border-[#c5cde0]" />
        <div className="flex flex-col gap-1 pt-px pl-0.5">
          <button type="button" aria-label="渲染" className="w-6"><Iris inner={<circle cx="12" cy="12" r="5" fill="#3a3a3a" />} /></button>
          <div className="flex items-center gap-[6px]">
            <button type="button" aria-label="更新"><Iris inner={<><circle cx="12" cy="12" r="5" fill="#3a3a3a" /><path d="M12 8l-4 4h2.500v3h3v-3H16z" fill="#fff" /></>} /></button>
            <button type="button" aria-label="更多" className="text-sm leading-6 font-bold">»</button>
          </div>
        </div>
      </div>
    </section>
  )
}

const body =
  'M378 272Q388 269 395 276C415 292 430 307 458 320Q480 325 505 320L673 267L679 268L705 329L702 335L630 358C592 370 566 376 550 388C535 401 527 420 521 436L517 470L513 500L510 520V656H458L451 515L441 455C425 463 410 452 400 438C392 424 393 408 405 401L412 398L414 390C408 372 385 352 353 327C343 316 345 300 356 287Q365 275 378 272Z'

function Model() {
  return (
    <svg viewBox="63 138 944 517" preserveAspectRatio="xMidYMid slice" className="size-full">
      <defs>
        <clipPath id="shape"><path d={body} /></clipPath>
        <filter id="soft" x="-50%" y="-50%" width="200%" height="200%"><feGaussianBlur stdDeviation="6" /></filter>
        <linearGradient id="trunk">
          <stop offset="0" stopColor="#7a7a7a" /><stop offset=".2" stopColor="#bdbdbd" /><stop offset=".5" stopColor="#d2d2d2" />
          <stop offset=".72" stopColor="#ededed" /><stop offset=".88" stopColor="#fff" /><stop offset="1" stopColor="#a5a5a5" />
        </linearGradient>
        <linearGradient id="fade" gradientUnits="userSpaceOnUse" x1="0" y1="435" x2="0" y2="485">
          <stop offset="0" stopColor="#000" /><stop offset="1" stopColor="#fff" />
        </linearGradient>
        <mask id="fadeIn"><path d="M420 430h120v230H420z" fill="url(#fade)" /></mask>
      </defs>
      <g clipPath="url(#shape)">
        <path d={body} fill="#d6d6d6" />
        <path d="M438 430L451 515L456 656H511L514 500L524 430z" fill="url(#trunk)" mask="url(#fadeIn)" />
        <g fill="none" filter="url(#soft)">
          <path d="M395 276Q430 316 475 326" stroke="#6c6c6c" strokeWidth="12" />
          <path d="M365 292Q420 340 445 348" stroke="#f4f4f4" strokeWidth="14" />
          <path d="M352 326Q395 355 408 392" stroke="#9a9a9a" strokeWidth="8" />
          <path d="M505 322L675 268" stroke="#b5b5b5" strokeWidth="8" />
          <path d="M500 378C540 345 600 313 690 292" stroke="#fff" strokeWidth="16" />
          <path d="M530 405C565 360 620 355 702 328" stroke="#bdbdbd" strokeWidth="7" />
          <path d="M415 405Q455 412 485 392" stroke="#acacac" strokeWidth="12" />
          <path d="M440 430L505 415" stroke="#e6e6e6" strokeWidth="14" />
          <path d="M425 385L455 370" stroke="#fafafa" strokeWidth="14" />
          <path d="M438 458Q446 466 462 466" stroke="#888" strokeWidth="6" />
        </g>
      </g>
      <g fill="none" stroke="#000" strokeWidth="1.500" strokeLinecap="round" strokeLinejoin="round">
        <path d="M376 272C366 274 347 288 347 309C347 320 350 324 355 328L400 366Q411 376 412 389" />
        <path d="M376 272Q388 268 394 275" />
        <path d="M376 272L400 291C420 307 430 320 456 338C470 352 493 368 502 382C510 394 509 410 508 425C505 440 501 446 497 452C492 470 493 500 493 530L496 656" />
        <path d="M456 338C478 335 492 330 506 326L675 269" />
        <path d="M480 322C468 320 460 323 456 338C451 352 452 366 447 376C440 388 425 394 415 403" />
        <path d="M456 338C438 340 424 345 414 355C403 366 410 378 414 391" />
        <path d="M702 335L630 358C592 370 568 376 553 387C538 396 530 410 522 421C513 435 503 448 497 452C487 462 470 469 447 453" />
        <path d="M452 447C465 441 478 443 486 447C496 453 518 457 521 434" />
        <path d="M445 478V486Q480 507 514 484V476" />
        <path d="M448 497L449 502Q480 521 511 501M449 504Q480 527 511 504" />
        <g strokeWidth="2">
          <path d="M355 327Q354 319 360 321C375 332 392 353 407 369Q413 378 413 391" />
          <path d="M506 320L602 290V306L504 342z" />
          <path d="M445 457C453 452 454 447 457 437C475 432 490 420 510 405L553 375C575 360 590 352 603 348L658 330Q665 327 667 335L669 346" />
          <path d="M471 511V504Q471 501 474 501T477 504V511" />
          <rect x="472" y="521" width="6" height="13" rx="3" />
          <ellipse cx="463" cy="522" rx="3.500" ry="4" transform="rotate(-25 463 522)" />
          <ellipse cx="488" cy="524" rx="4" ry="4" />
          <ellipse cx="502" cy="520" rx="3" ry="4.500" transform="rotate(20 502 520)" />
          <ellipse cx="453" cy="516" rx="1" ry="3" />
        </g>
        <ellipse cx="419" cy="429" rx="23" ry="30" transform="rotate(-20 419 429)" fill="#e6e6e6" />
        <ellipse cx="416" cy="430" rx="21" ry="28" transform="rotate(-20 416 430)" fill="#bbb" />
        <path d="M673 267C674 278 697 330 702 334" strokeWidth="2" />
        <ellipse cx="691" cy="299" rx="5" ry="34" transform="rotate(-23 691 299)" fill="#999b9d" strokeWidth="2" />
      </g>
      <path d="M99.500 591v27.500H129" fill="none" stroke="#686c70" />
      <g fill="#5f6367" fontSize="13"><text x="101" y="592">z</text><text x="103" y="605">y</text><text x="132" y="619">x</text></g>
    </svg>
  )
}

function ViewportTabs() {
  const tabs = [
    ['Perspective', 'w-[87px] pl-3'],
    ['Top', 'w-10 pl-3'],
    ['Front', 'w-[50px] pl-3'],
    ['Right', 'w-[49px] pl-3'],
    ['+', 'w-[33px] pl-[14px]'],
  ]
  return (
    <div className="flex h-6 shrink-0 text-[13px]">
      {tabs.map(([name, cls], i) => {
        const grey = i > 0 && i < 4
        return (
          <button key={name} type="button" aria-label={name === '+' ? '新增' : undefined} className={clsx('relative h-6 shrink-0 pt-0.5 text-left', cls)}>
            <svg viewBox="0 0 12 24" className="absolute top-0 left-0 h-6 w-3">
              <path d="M.5 0v8l8 13q1.500 2.500 3.500 2.500V0z" fill={grey ? '#d8d8d8' : '#f1f2f6'} />
              <path d="M.5 0v8l8 13q1.500 2.500 3.500 2.500" fill="none" stroke="#bcc6dd" />
            </svg>
            <span className={clsx('absolute inset-y-0 right-0 left-3 rounded-br-[3px] border-r border-b border-[#bcc6dd]', grey ? 'bg-[#d8d8d8]' : 'bg-[#f1f2f6]')} />
            {name === '+' ? (
              <svg viewBox="0 0 10 10" className="relative size-[10px]"><path d="M3.500.5h3v3h3v3h-3v3h-3v-3h-3v-3h3z" fill="#fff" stroke="#666" /></svg>
            ) : (
              <span className="relative">{name}</span>
            )}
          </button>
        )
      })}
    </div>
  )
}

function ValueCell({ row, id }: { row: Row; id: string }) {
  if (row.kind === 'button') {
    return (
      <button id={id} type="button" className="ml-px block h-6 w-full rounded-l-[3px] border border-r-0 border-[#707070] bg-linear-to-b from-[#f2f2f2] via-[#e6e6e6] to-[#cfcfcf] pl-4 text-center leading-5">
        {row.value}
      </button>
    )
  }
  if (row.kind === 'select') {
    return (
      <div className="flex h-6">
        <select id={id} className="min-w-0 flex-1 appearance-none pl-[3px] outline-none"><option>{row.value}</option><option>平行</option></select>
        <span className="w-2 border-t border-l border-[#707070] bg-linear-to-b from-[#f2f2f2] from-50% to-[#cfcfcf] to-50%" />
      </div>
    )
  }
  return (
    <input
      id={id}
      defaultValue={row.value}
      disabled={row.kind === 'disabled'}
      readOnly={row.kind === 'readonly'}
      className="block h-6 w-full pl-1 outline-none disabled:text-[#6d6d6d]"
    />
  )
}

function PropertiesPanel() {
  return (
    <aside className="ml-2 flex w-[286px] shrink-0 flex-col pt-[3px] pb-1">
      <div className="h-[3px] shrink-0 border-y border-[#ccd3e3]" />
      <div className="relative z-10 mt-0.5 flex h-7 shrink-0">
        {panelTabs.map((tab, i) => (
          <button key={i} type="button" className={clsx('relative flex h-7 w-11 shrink-0 items-center gap-px pl-1 text-[13px]', i === 0 && 'z-10')}>
            <svg viewBox="0 0 58 28" className="absolute top-0 left-0 h-7 w-[58px]">
              <path d="M.5 28V4Q.5.500 4 .5H27Q30 .5 32 2.500L58 28z" fill={i === 0 ? '#f7f7fa' : '#d8d8d8'} />
              <path d="M.5 28V4Q.5.500 4 .5H27Q30 .5 32 2.500L58 28" fill="none" stroke="#bcc6dd" />
            </svg>
            <svg viewBox="0 0 16 16" className="relative size-4">{tab.art}</svg>
            <span className="relative">{tab.name}</span>
          </button>
        ))}
        <svg viewBox="0 0 16 16" className="relative ml-auto size-4 self-end"><circle cx="8" cy="8" r="4" fill="none" stroke="#b5b5b5" strokeWidth="4" /><circle cx="8" cy="8" r="6.500" fill="none" stroke="#b5b5b5" strokeWidth="2" strokeDasharray="3.100 2" /></svg>
      </div>
      <div className="-mt-px flex min-h-0 flex-1 flex-col border border-r-2 border-[#bcc6dd] bg-[#f7f7fa]">
        <div className="flex h-9 shrink-0 gap-1 pt-1 pl-[3px]">
          <button type="button" aria-label="相机" className="size-[26px] rounded-[3px] border-2 border-[#33698f] bg-[#6ba0c4]">
            <svg viewBox="0 0 22 22" className="size-[22px]"><path d="M1 8h4l3-4h7l2 4h4v10H2z" fill="#2c2c2c" stroke="#111" /><circle cx="13" cy="12" r="4.500" fill="#777" stroke="#ccc" /><circle cx="13" cy="12" r="2.500" fill="#222" /></svg>
          </button>
          <button type="button" aria-label="底色" className="size-[26px] rounded-[3px] border-2 border-[#6d6d6d] bg-[#bdbdbd]">
            <svg viewBox="0 0 22 22" className="size-[22px]"><path d="M2 3.500h18v15H2z" fill="#fff" stroke="#5cc0dd" strokeWidth="2" /><path d="M4.500 6.500h13v9h-13z" fill="#fff" stroke="#e51c1c" /></svg>
          </button>
          <button type="button" aria-label="物件" className="size-[26px] rounded-[3px] border-2 border-[#6d6d6d] bg-[#f0f0f0]">
            <svg viewBox="0 0 22 22" className="size-[22px]"><circle cx="18" cy="4" r="3" fill="url(#ball)" stroke="#123" /><circle cx="13" cy="9" r="4" fill="url(#ball)" stroke="#123" /><circle cx="7" cy="15" r="5" fill="url(#ball)" stroke="#123" /></svg>
          </button>
        </div>
        <div className="flex min-h-0 flex-1">
          <div className="ml-0.5 min-w-0 flex-1 overflow-hidden border-l border-[#e8e9ee]">
            <table className="w-full table-fixed border-collapse text-[13px]">
              <colgroup><col className="w-[18px]" /><col className="w-[119px]" /><col /></colgroup>
              {groups.map((group) => (
                <tbody key={group.title}>
                  <tr className="h-[31px] border-b border-[#e8e9ee]"><th colSpan={3} className="pl-[3px] text-left text-[15px] leading-5 font-normal">{group.title}</th></tr>
                  {group.rows.map((row) => {
                    const id = `${group.title}-${row.label}`.replace(' ', '-')
                    const dim = row.kind === 'disabled' || row.kind === 'readonly'
                    return (
                      <tr key={row.label} className="h-[25px] border-b border-[#e8e9ee] leading-6">
                        <td />
                        <td className="border-r border-[#e8e9ee] bg-white pl-1">
                          <label htmlFor={id} className={clsx(row.kind === 'disabled' && 'text-[#6d6d6d]')}>{row.label}</label>
                        </td>
                        <td className={dim ? 'bg-[#eaebee]' : 'bg-white'}><ValueCell row={row} id={id} /></td>
                      </tr>
                    )
                  })}
                </tbody>
              ))}
            </table>
          </div>
          <div className="mr-[3px] ml-1 flex w-[15px] shrink-0 flex-col bg-[#f0f0f0]">
            <div className="flex h-[18px] items-center justify-center"><svg viewBox="0 0 7 4" className="h-1 w-[7px]"><path d="M0 4l3.500-4L7 4z" fill="#333" /></svg></div>
            <div className="flex flex-[7] items-center justify-center rounded-[2px] border border-[#8f8f8f] bg-linear-to-r from-[#f4f4f4] to-[#c4c4c4]">
              <svg viewBox="0 0 7 8" className="h-2 w-[7px]"><path d="M0 .5h7M0 3.500h7M0 6.500h7" stroke="#444" /></svg>
            </div>
            <div className="flex-[1.6]" />
            <div className="flex h-[18px] items-center justify-center"><svg viewBox="0 0 7 4" className="h-1 w-[7px]"><path d="M0 0h7L3.500 4z" fill="#333" /></svg></div>
          </div>
        </div>
      </div>
    </aside>
  )
}

function SnapBar() {
  return (
    <section className="flex h-[26px] shrink-0 items-center gap-[7px] pt-2 text-[13px] leading-4 text-[#6d6d6d]">
      <div className="-mr-[6px] ml-px h-4 w-[3px] border-x border-[#d0d7e6]" />
      <div className="w-0" />
      {snaps.map(([name, checked]) => (
        <label key={name} className="flex shrink-0 items-center gap-[3px] first-of-type:-ml-[5px]">
          <span className="relative size-[13px]">
            <input type="checkbox" defaultChecked={checked} className="peer block size-[13px] appearance-none border border-[#b4b4b4] bg-[#f8f8f8]" />
            <svg viewBox="0 0 13 13" className="pointer-events-none absolute inset-0 hidden size-[13px] peer-checked:block"><path d="M3.500 6l2 3.500L9.500 3" fill="none" stroke="#a5a5a5" strokeWidth="2" /></svg>
          </span>
          {name}
        </label>
      ))}
      <label className="flex shrink-0 items-center gap-1">
        <input type="checkbox" className="size-[11px] appearance-none rounded-[3px] border border-[#b0b0b0] bg-[#f6f6f6]" />
        投影
      </label>
      <label className="ml-[14px] flex shrink-0 items-center gap-1 text-black">
        <input type="checkbox" defaultChecked className="size-[11px] appearance-none rounded-[2px] border border-[#2c5f86] bg-[#8c8f92]" />
        停用
      </label>
    </section>
  )
}

function StatusBar() {
  const line = 'shrink-0 border-r border-[#bcc6dd]'
  return (
    <footer className="flex h-5 shrink-0 border-t border-[#bcc6dd] leading-[19px]">
      <button type="button" className={clsx(line, 'w-[59px] pl-1 text-left')}>工作平面</button>
      <div className={clsx(line, 'w-[88px] text-center')}>x 174.875</div>
      <div className={clsx(line, 'w-[88px] text-center')}>y 208.050</div>
      <div className={clsx(line, 'w-[88px] text-center')}>z 0.000</div>
      <div className={clsx(line, 'w-[88px] text-center')}>毫米</div>
      <div className={clsx(line, 'flex w-[168px] items-center gap-0.5 pl-[3px]')}><span className="size-[14px] bg-black" />默认值</div>
      {statusToggles.map((name) => (
        <button key={name} type="button" className={clsx(line, 'pr-[6px] pl-[7px]', (name === '平面模式' || name === '操作轴') && 'bg-[#e2f1fb] font-bold')}>{name}</button>
      ))}
      <button type="button" className={clsx(line, 'pr-[6px] pl-[7px]')}>过滤器</button>
      <div className="min-w-0 flex-1 border-r border-[#bcc6dd] pl-px">CPU 使用量: 3.3 %</div>
      <div className="w-[26px]" />
    </footer>
  )
}

export default function App() {
  return (
    <div className="relative h-screen overflow-hidden bg-[#d7e4f2] pr-[5px] pb-[7px] font-['Noto_Sans','Noto_Sans_CJK_SC',sans-serif] text-xs text-black">
      <Gradients />
      <div className="flex h-full flex-col bg-[#ebecf0]">
        <nav className="flex h-[17px] shrink-0 gap-[15px] border-b border-[#b4bfd8] bg-linear-to-b from-[#f6f8fc] from-20% to-[#d7deef] to-40% pl-[5px] leading-[15px] text-[#6d6d6d]">
          {menus.map((m) => <a key={m} href="#menu" className="whitespace-nowrap">{m}</a>)}
        </nav>
        <CommandArea />
        <Toolbars />
        <main className="flex min-h-0 flex-1">
          <section className="w-[62px] shrink-0 pt-1">
            <div className="mr-[6px] ml-px h-[3px] border-y border-[#ccd3e3]" />
            <div className="mt-px grid w-14 grid-cols-2">
              {sideTools.map((t) => <ToolButton key={t.label} tool={t} />)}
            </div>
          </section>
          <div className="flex min-w-0 flex-1 flex-col pb-px">
            <section className="relative min-h-0 flex-1 overflow-hidden border border-[#bcc6dd] bg-[#9da3ab]">
              <Model />
              <button type="button" className="absolute top-0 left-px flex h-5 items-center bg-[#8ca5c1] pl-[6px] text-[13px] font-bold">
                Perspective
                <span className="ml-[9px] h-4 w-px bg-black" />
                <svg viewBox="0 0 8 4" className="mx-px h-1 w-2"><path d="M0 0h8L4 4z" /></svg>
              </button>
            </section>
            <ViewportTabs />
          </div>
          <PropertiesPanel />
        </main>
        <SnapBar />
        <StatusBar />
      </div>
      <div className="absolute right-[34px] bottom-[34px] flex h-[42px] w-[98px] items-center gap-[3px] rounded-[5px] bg-[#f0f0f2]/50 pl-[7px] shadow">
        <div className="w-[63px]">
          <p className="font-['Noto_Serif_CJK_SC','Noto_Sans_CJK_SC',serif] text-xl leading-5 font-black">学犀牛</p>
          <p className="text-[10px] leading-4 font-semibold">xuexiniu.com</p>
        </div>
        <p className="h-[30px] w-[19px] bg-[#ca374a] text-center text-[10px] leading-[19px] font-bold text-white [writing-mode:vertical-rl]">中文网</p>
      </div>
    </div>
  )
}
